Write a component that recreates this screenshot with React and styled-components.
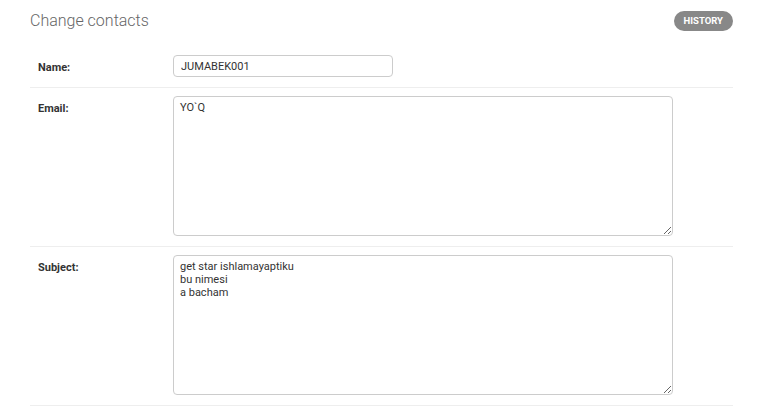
import React from 'react';
import styled, { createGlobalStyle } from 'styled-components';

const GlobalStyle = createGlobalStyle`
  html, body {
    margin: 0;
    padding: 0;
    background: #fff;
  }
  body {
    font-family: Roboto, "Liberation Sans", Arial, sans-serif;
    color: #333;
  }
`;

const Content = styled.div`
  padding: 0 27px 0 30px;
`;

const Header = styled.div`
  display: flex;
  align-items: center;
  justify-content: space-between;
  height: 47px;
  padding-bottom: 6px;
  box-sizing: border-box;
`;

const Title = styled.h1`
  margin: 0;
  font-size: 16px;
  font-weight: 300;
  color: #666;
`;

const HistoryButton = styled.a`
  display: inline-block;
  background: #888;
  color: #fff;
  font-size: 9.5px;
  font-weight: 700;
  letter-spacing: 0;
  text-transform: uppercase;
  padding: 4px 10px;
  border-radius: 15px;
  line-height: 12px;
  cursor: pointer;
`;

const Row = styled.div`
  display: flex;
  align-items: flex-start;
  padding: 8px 8px 10px;
  border-bottom: 1px solid #eee;
`;

const Label = styled.label`
  width: 135px;
  flex: none;
  font-size: 11px;
  font-weight: 700;
  color: #333;
  padding-top: ${p => (p.$top ? p.$top : 8)}px;
`;

const TextInput = styled.input`
  width: 220px;
  height: 22px;
  box-sizing: border-box;
  border: 1px solid #ccc;
  border-radius: 4px;
  padding: 4px 7px;
  font-family: Roboto, "Liberation Sans", Arial, sans-serif;
  font-size: 11px;
  color: #333;
  outline: none;
`;

const TextArea = styled.textarea`
  width: 500px;
  height: 140px;
  box-sizing: border-box;
  border: 1px solid #ccc;
  border-radius: 4px;
  padding: 4px 6px;
  font-family: Roboto, "Liberation Sans", Arial, sans-serif;
  font-size: 11px;
  line-height: 13px;
  color: #333;
  resize: both;
  outline: none;
  margin: 0;
`;

export default function App() {
  return (
    <>
      <GlobalStyle />
      <Content>
        <Header>
          <Title>Change contacts</Title>
          <HistoryButton>History</HistoryButton>
        </Header>
        <Row>
          <Label $top={6}>Name:</Label>
          <TextInput defaultValue="JUMABEK001" />
        </Row>
        <Row>
          <Label $top={6}>Email:</Label>
          <TextArea defaultValue="YO`Q" />
        </Row>
        <Row>
          <Label $top={6}>Subject:</Label>
          <TextArea defaultValue={'get star ishlamayaptiku\nbu nimesi\na bacham'} />
        </Row>
      </Content>
    </>
  );
}
